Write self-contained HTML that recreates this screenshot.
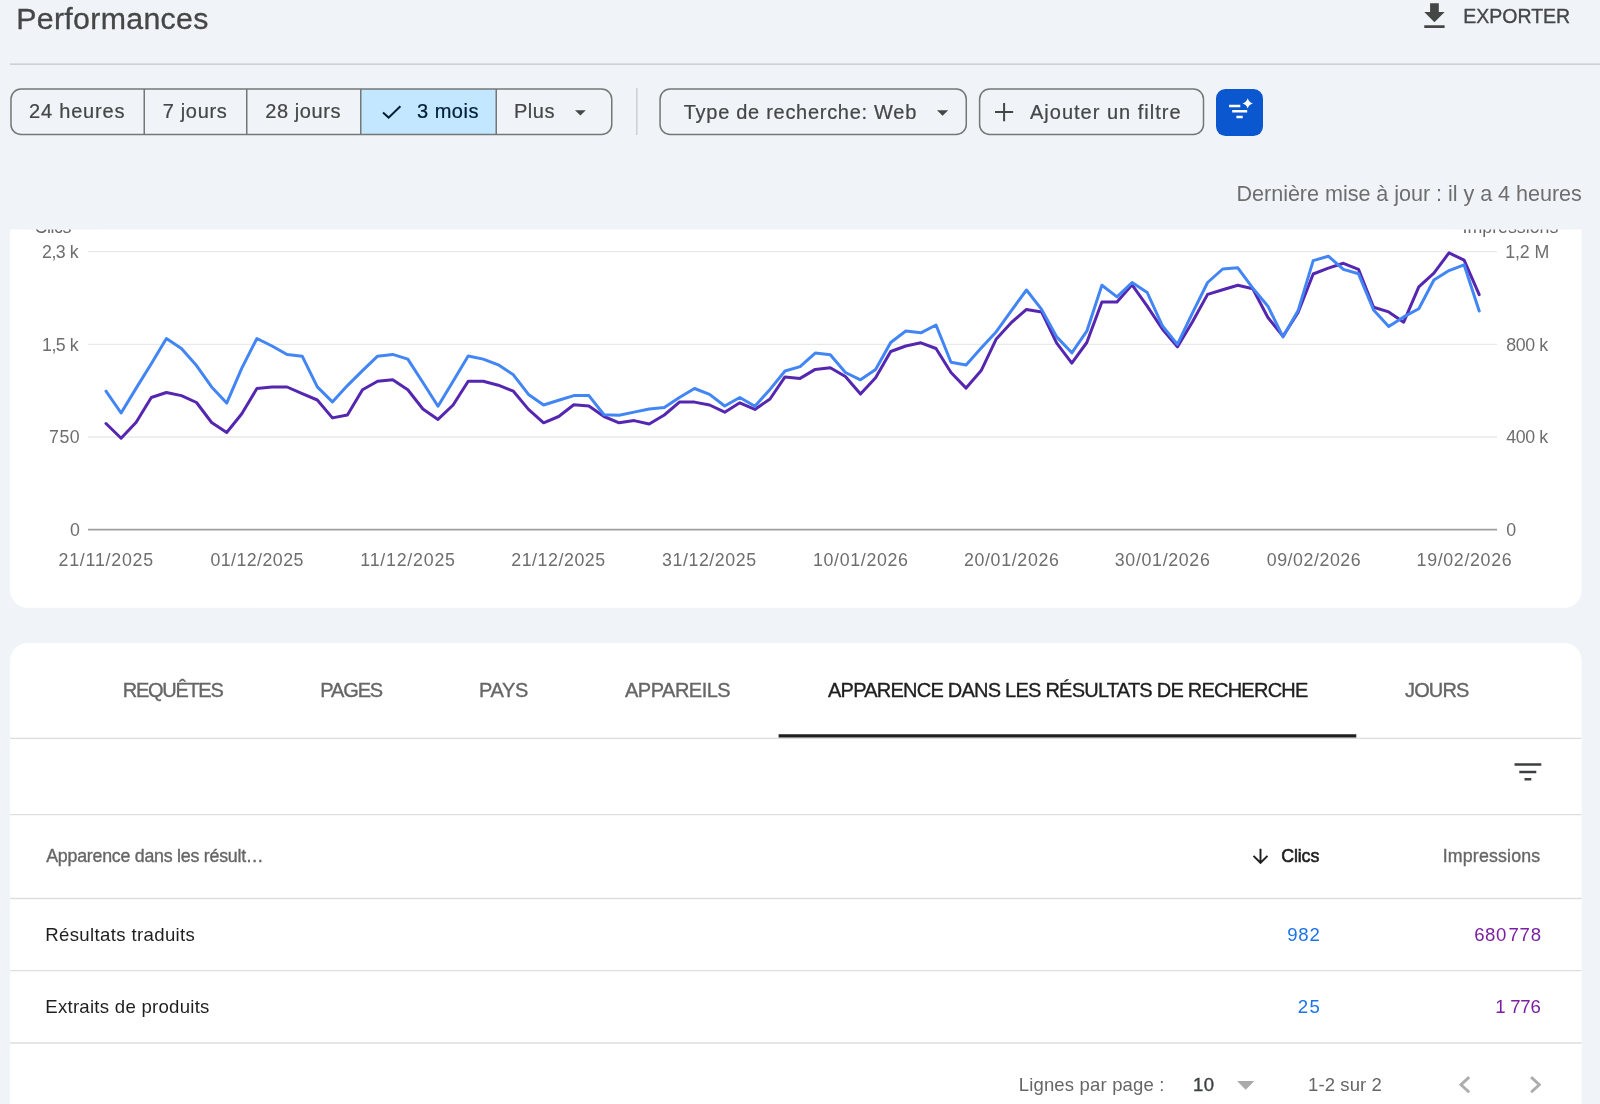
<!DOCTYPE html>
<html lang="fr"><head><meta charset="utf-8"><title>Performances</title>
<style>
html,body{margin:0;padding:0}
body{width:1600px;height:1104px;overflow:hidden;position:relative;background:#f0f4f9;font-family:'Liberation Sans', sans-serif;}
.t{position:absolute;line-height:1;white-space:nowrap}
.a{position:absolute}
svg{position:absolute;overflow:visible}
#w{position:absolute;left:0;top:0;width:1600px;height:1104px;will-change:transform}
</style></head><body><div id="w">

<!-- header -->
<span class="t" style="left:16.20px;top:4px;font-size:30.3px;letter-spacing:0.327px;color:#444746;-webkit-text-stroke:0.3px currentColor;">Performances</span>
<svg style="left:1416.5px;top:-1.4px" width="34.9" height="34.9" viewBox="0 0 24 24"><path fill="#444746" d="M19 9h-4V3H9v6H5l7 7 7-7zM5 18v2h14v-2H5z"/></svg>
<span class="t" style="left:1463.25px;top:7px;font-size:19.5px;letter-spacing:0.000px;color:#444746;-webkit-text-stroke:0.35px currentColor;">EXPORTER</span>

<!-- segmented date range -->
<svg style="left:0;top:0" width="1600" height="1104" viewBox="0 0 1600 1104">
<rect x="360.75" y="89" width="135.5" height="45.5" fill="#c2e7ff"/>
<g fill="none" stroke="#747775" stroke-width="1.5">
<rect x="10.97" y="89" width="600.78" height="45.5" rx="10"/>
<path d="M144.25 89V134.5M246.75 89V134.5M360.75 89V134.5M496.25 89V134.5"/>
<rect x="660.07" y="89.05" width="306.2" height="45.45" rx="10"/>
<rect x="979.6" y="89.05" width="223.9" height="45.45" rx="10"/>
</g>
<path d="M636.8 88V135" stroke="#c4c7c5" stroke-width="1.2"/>
<path d="M10 64.2H1600" stroke="#c4c7c5" stroke-width="1.3"/>
</svg>
<span class="t" style="left:29.00px;top:101px;font-size:20px;letter-spacing:0.812px;color:#444746;-webkit-text-stroke:0.22px currentColor;">24 heures</span>
<span class="t" style="left:162.75px;top:101px;font-size:20px;letter-spacing:0.667px;color:#444746;-webkit-text-stroke:0.22px currentColor;">7 jours</span>
<span class="t" style="left:265.25px;top:101px;font-size:20px;letter-spacing:0.571px;color:#444746;-webkit-text-stroke:0.22px currentColor;">28 jours</span>
<span class="t" style="left:417.00px;top:101px;font-size:20px;letter-spacing:0.500px;color:#001d35;-webkit-text-stroke:0.22px currentColor;">3 mois</span>
<span class="t" style="left:514.00px;top:101px;font-size:20px;letter-spacing:0.500px;color:#444746;-webkit-text-stroke:0.22px currentColor;">Plus</span>
<svg style="left:382px;top:105px" width="19.5" height="14" viewBox="0 0 19.5 14"><path d="M1 7.6 L6.6 12.6 L18.4 1.2" fill="none" stroke="#001d35" stroke-width="2"/></svg>
<svg style="left:575.4px;top:109.6px" width="10.8" height="5.8" viewBox="0 0 10 5"><path d="M0 0h10L5 5z" fill="#444746"/></svg>

<!-- filter chips -->
<span class="t" style="left:683.75px;top:102px;font-size:20px;letter-spacing:0.714px;color:#444746;-webkit-text-stroke:0.22px currentColor;">Type de recherche: Web</span>
<svg style="left:937.0px;top:109.7px" width="11.2" height="6" viewBox="0 0 10 5"><path d="M0 0h10L5 5z" fill="#444746"/></svg>
<svg style="left:995px;top:103px" width="18.2" height="18.2" viewBox="0 0 18 18"><path d="M9 0v18M0 9h18" fill="none" stroke="#444746" stroke-width="2"/></svg>
<span class="t" style="left:1030.00px;top:102px;font-size:20px;letter-spacing:1.000px;color:#444746;-webkit-text-stroke:0.22px currentColor;">Ajouter un filtre</span>
<div class="a" style="left:1215.9px;top:88.8px;width:47.1px;height:46.9px;border-radius:9.5px;background:#0b57d0"></div>
<svg style="left:1215.8px;top:87.95px" width="47.2" height="46.8" viewBox="0 0 47.2 46.8">
<g stroke="#fff" stroke-width="2.5" fill="none"><path d="M13.1 17.9H24.3M16.2 23.35H31.2M20.4 29H26.7"/></g>
<path fill="#fff" d="M31.7 10.2 Q32.85 14.25 36.9 15.4 Q32.85 16.55 31.7 20.6 Q30.55 16.55 26.5 15.4 Q30.55 14.25 31.7 10.2z"/>
</svg>

<span class="t" style="left:1236.50px;top:183px;font-size:21.6px;letter-spacing:-0.041px;color:#6e6e6e;">Dernière mise à jour : il y a 4 heures</span>

<!-- chart card -->
<svg style="left:0;top:0" width="1600" height="1104" viewBox="0 0 1600 1104">
<path fill="#fff" d="M10.2 229.5H1581.6V590.3A17.5 17.5 0 0 1 1564.1 607.8H27.7A17.5 17.5 0 0 1 10.2 590.3z"/>
<path fill="#fff" d="M10.2 1110V660.5A17.5 17.5 0 0 1 27.7 643H1564.1A17.5 17.5 0 0 1 1581.6 660.5V1110z"/>
</svg>
<span class="t" style="left:34.5px;top:219px;font-size:17.8px;color:#666;letter-spacing:-0.4px">Clics</span>
<span class="t" style="left:1462.5px;top:219px;font-size:17.8px;color:#666;letter-spacing:0px">Impressions</span>
<svg style="left:0;top:0" width="1600" height="1104" viewBox="0 0 1600 1104"><path fill="#f0f4f9" d="M20 212H100V229.5H20zM1450 212H1575V229.5H1450z"/></svg>
<svg style="left:0;top:0" width="1600" height="1104" viewBox="0 0 1600 1104">
<g stroke="#e9e9e9" stroke-width="1.3"><path d="M88 251.7H1497M88 344.3H1497M88 437H1497"/></g>
<path d="M88 529.6H1497" stroke="#9e9e9e" stroke-width="1.6"/>
<polyline fill="none" stroke="#5527b0" stroke-width="3" stroke-linejoin="round" stroke-linecap="round" points="106.0,423.5 121.1,438.2 136.2,422.2 151.3,397.5 166.4,392.5 181.4,395.6 196.5,402.5 211.6,422.5 226.7,432.5 241.8,413.8 256.9,388.5 272.0,387.1 287.1,387.0 302.2,393.6 317.3,400.0 332.4,417.9 347.4,415.0 362.5,389.8 377.6,381.2 392.7,379.8 407.8,389.8 422.9,409.0 438.0,419.4 453.1,405.0 468.2,381.2 483.2,381.2 498.3,385.2 513.4,391.2 528.5,409.4 543.6,422.8 558.7,416.5 573.8,404.8 588.9,406.0 604.0,416.5 619.1,422.8 634.1,420.6 649.2,424.0 664.3,415.0 679.4,402.1 694.5,402.1 709.6,405.0 724.7,412.2 739.8,402.8 754.9,409.4 770.0,399.0 785.0,376.9 800.1,378.4 815.2,369.4 830.3,367.8 845.4,376.5 860.5,394.1 875.6,377.8 890.7,351.5 905.8,346.0 920.9,342.8 936.0,348.5 951.0,372.5 966.1,388.1 981.2,370.6 996.3,338.9 1011.4,322.5 1026.5,309.4 1041.6,311.9 1056.7,343.1 1071.8,363.1 1086.8,342.5 1101.9,301.9 1117.0,301.9 1132.1,284.8 1147.2,306.2 1162.3,329.0 1177.4,346.9 1192.5,321.8 1207.6,294.4 1222.7,289.8 1237.8,285.2 1252.8,288.8 1267.9,317.5 1283.0,336.2 1298.1,312.5 1313.2,274.0 1328.3,268.1 1343.4,263.3 1358.5,269.4 1373.6,307.2 1388.7,311.9 1403.7,322.2 1418.8,286.9 1433.9,273.1 1449.0,252.9 1464.1,260.2 1479.2,294.6"/>
<polyline fill="none" stroke="#4285f4" stroke-width="3" stroke-linejoin="round" stroke-linecap="round" points="106.0,391.2 121.1,413.0 136.2,388.1 151.3,363.8 166.4,338.5 181.4,348.5 196.5,365.6 211.6,386.9 226.7,403.1 241.8,368.1 256.9,338.5 272.0,346.0 287.1,354.5 302.2,356.2 317.3,386.9 332.4,401.9 347.4,385.6 362.5,370.6 377.6,356.2 392.7,354.4 407.8,359.1 422.9,382.5 438.0,406.2 453.1,381.2 468.2,356.0 483.2,359.1 498.3,364.8 513.4,374.8 528.5,394.4 543.6,405.0 558.7,400.2 573.8,395.6 588.9,395.6 604.0,414.8 619.1,415.2 634.1,412.1 649.2,409.0 664.3,407.5 679.4,397.5 694.5,388.5 709.6,394.4 724.7,406.0 739.8,397.5 754.9,406.2 770.0,389.4 785.0,371.0 800.1,366.6 815.2,353.1 830.3,354.8 845.4,372.5 860.5,379.8 875.6,369.4 890.7,342.5 905.8,331.0 920.9,332.8 936.0,325.0 951.0,362.2 966.1,365.0 981.2,348.0 996.3,331.7 1011.4,310.6 1026.5,290.0 1041.6,309.4 1056.7,336.9 1071.8,352.8 1086.8,331.2 1101.9,285.2 1117.0,296.9 1132.1,282.5 1147.2,292.5 1162.3,325.6 1177.4,344.4 1192.5,312.8 1207.6,282.5 1222.7,269.0 1237.8,267.8 1252.8,288.1 1267.9,306.2 1283.0,336.9 1298.1,310.6 1313.2,260.6 1328.3,256.2 1343.4,269.4 1358.5,273.8 1373.6,310.0 1388.7,326.6 1403.7,316.9 1418.8,308.8 1433.9,280.0 1449.0,270.6 1464.1,264.8 1479.2,311.0"/>
</svg>
<span class="t" style="left:42.00px;top:244px;font-size:17.8px;letter-spacing:-0.500px;color:#6e6e6e;">2,3 k</span>
<span class="t" style="left:42.00px;top:337px;font-size:17.8px;letter-spacing:-0.500px;color:#6e6e6e;">1,5 k</span>
<span class="t" style="left:49.00px;top:429px;font-size:17.8px;letter-spacing:0.500px;color:#6e6e6e;">750</span>
<span class="t" style="left:70.00px;top:522px;font-size:17.8px;letter-spacing:0.000px;color:#6e6e6e;">0</span>
<span class="t" style="left:1505.25px;top:244px;font-size:17.8px;letter-spacing:-0.125px;color:#6e6e6e;">1,2 M</span>
<span class="t" style="left:1506.25px;top:337px;font-size:17.8px;letter-spacing:-0.375px;color:#6e6e6e;">800 k</span>
<span class="t" style="left:1506.25px;top:429px;font-size:17.8px;letter-spacing:-0.375px;color:#6e6e6e;">400 k</span>
<span class="t" style="left:1506.25px;top:522px;font-size:17.8px;letter-spacing:0.000px;color:#6e6e6e;">0</span>
<span class="t" style="left:58.50px;top:552px;font-size:17.8px;letter-spacing:0.778px;color:#6e6e6e;">21/11/2025</span>
<span class="t" style="left:210.40px;top:552px;font-size:17.8px;letter-spacing:0.444px;color:#6e6e6e;">01/12/2025</span>
<span class="t" style="left:360.30px;top:552px;font-size:17.8px;letter-spacing:0.778px;color:#6e6e6e;">11/12/2025</span>
<span class="t" style="left:511.20px;top:552px;font-size:17.8px;letter-spacing:0.556px;color:#6e6e6e;">21/12/2025</span>
<span class="t" style="left:662.10px;top:552px;font-size:17.8px;letter-spacing:0.556px;color:#6e6e6e;">31/12/2025</span>
<span class="t" style="left:813.00px;top:552px;font-size:17.8px;letter-spacing:0.667px;color:#6e6e6e;">10/01/2026</span>
<span class="t" style="left:963.90px;top:552px;font-size:17.8px;letter-spacing:0.667px;color:#6e6e6e;">20/01/2026</span>
<span class="t" style="left:1114.80px;top:552px;font-size:17.8px;letter-spacing:0.667px;color:#6e6e6e;">30/01/2026</span>
<span class="t" style="left:1266.70px;top:552px;font-size:17.8px;letter-spacing:0.556px;color:#6e6e6e;">09/02/2026</span>
<span class="t" style="left:1416.60px;top:552px;font-size:17.8px;letter-spacing:0.667px;color:#6e6e6e;">19/02/2026</span>

<!-- table card -->

<span class="t" style="left:122.75px;top:680px;font-size:20px;letter-spacing:-1.286px;color:#666;-webkit-text-stroke:0.35px currentColor;">REQUÊTES</span>
<span class="t" style="left:320.25px;top:680px;font-size:20px;letter-spacing:-1.125px;color:#666;-webkit-text-stroke:0.35px currentColor;">PAGES</span>
<span class="t" style="left:479.00px;top:680px;font-size:20px;letter-spacing:-0.333px;color:#666;-webkit-text-stroke:0.35px currentColor;">PAYS</span>
<span class="t" style="left:625.00px;top:680px;font-size:20px;letter-spacing:-0.500px;color:#666;-webkit-text-stroke:0.35px currentColor;">APPAREILS</span>
<span class="t" style="left:828.00px;top:680px;font-size:20px;letter-spacing:-0.763px;color:#1f1f1f;-webkit-text-stroke:0.35px currentColor;">APPARENCE DANS LES RÉSULTATS DE RECHERCHE</span>
<span class="t" style="left:1405.00px;top:680px;font-size:20px;letter-spacing:-0.875px;color:#666;-webkit-text-stroke:0.35px currentColor;">JOURS</span>
<svg style="left:0;top:0" width="1600" height="1104" viewBox="0 0 1600 1104">
<path stroke="#dcdcdc" stroke-width="1.2" d="M10.2 738.3H1581.6"/>
<path stroke="#dedede" stroke-width="1.4" d="M10.2 814.6H1581.6M10.2 898.5H1581.6M10.2 970.6H1581.6M10.2 1043H1581.6"/>
<path fill="#1f1f1f" d="M778.6 734.3H1356.3V737.45H778.6z"/>
<path stroke="#3c4043" stroke-width="2.5" d="M1514.5 764.6H1541.3M1519.3 771.9H1536.3M1524.5 779.3H1531.3"/>
</svg>

<span class="t" style="left:46.25px;top:848px;font-size:17.8px;letter-spacing:-0.240px;color:#666;-webkit-text-stroke:0.35px currentColor;">Apparence dans les résult…</span>
<span class="t" style="left:1281.25px;top:848px;font-size:17.8px;letter-spacing:-0.125px;color:#1f1f1f;-webkit-text-stroke:0.6px currentColor;">Clics</span>
<span class="t" style="left:1442.75px;top:848px;font-size:17.8px;letter-spacing:0.150px;color:#666;-webkit-text-stroke:0.35px currentColor;">Impressions</span>
<svg style="left:1249.0px;top:844.5px" width="23" height="23" viewBox="0 0 24 24"><path fill="#1f1f1f" d="M20 12l-1.41-1.41L13 16.17V4h-2v12.17l-5.58-5.59L4 12l8 8 8-8z"/></svg>
<span class="t" style="left:45.25px;top:926px;font-size:18.6px;letter-spacing:0.353px;color:#1f1f1f;">Résultats traduits</span>
<span class="t" style="left:1287.25px;top:926px;font-size:18.6px;letter-spacing:0.750px;color:#1a73e8;">982</span>
<span class="t" style="left:1474.25px;top:926px;font-size:18.6px;letter-spacing:0.500px;color:#7b1fa2;">680</span>
<span class="t" style="left:1508.50px;top:926px;font-size:18.6px;letter-spacing:0.750px;color:#7b1fa2;">778</span>
<span class="t" style="left:45.25px;top:998px;font-size:18.6px;letter-spacing:0.263px;color:#1f1f1f;">Extraits de produits</span>
<span class="t" style="left:1297.75px;top:998px;font-size:18.6px;letter-spacing:1.500px;color:#1a73e8;">25</span>
<span class="t" style="left:1495.25px;top:998px;font-size:18.6px;letter-spacing:0.000px;color:#7b1fa2;">1</span>
<span class="t" style="left:1510.25px;top:998px;font-size:18.6px;letter-spacing:-0.250px;color:#7b1fa2;">776</span>
<span class="t" style="left:1018.70px;top:1076px;font-size:18.5px;letter-spacing:0.175px;color:#666;">Lignes par page :</span>
<span class="t" style="left:1193.00px;top:1076px;font-size:18.5px;letter-spacing:0.500px;color:#3c4043;-webkit-text-stroke:0.35px currentColor;">10</span>
<span class="t" style="left:1308.10px;top:1076px;font-size:18.5px;letter-spacing:0.100px;color:#666;">1-2 sur 2</span>
<svg style="left:1236.6px;top:1080.9px" width="17.4" height="8.8" viewBox="0 0 10 5"><path d="M0 0h10L5 5z" fill="#aaa"/></svg>
<svg style="left:1458.75px;top:1076.3px" width="11.3" height="17.4" viewBox="0 0 11.3 17.4"><path d="M10.2 1.1 L2 8.7 L10.2 16.3" fill="none" stroke="#adadad" stroke-width="2.9"/></svg>
<svg style="left:1530.2px;top:1076.3px" width="11.3" height="17.4" viewBox="0 0 11.3 17.4"><path d="M1.1 1.1 L9.3 8.7 L1.1 16.3" fill="none" stroke="#adadad" stroke-width="2.9"/></svg>
</div></body></html>
